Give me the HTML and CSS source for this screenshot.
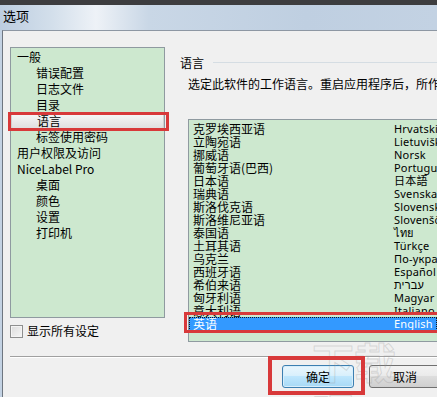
FILE: index.html
```html
<!DOCTYPE html>
<html lang="zh-CN">
<head>
    <meta charset="UTF-8">
    <title>选项</title>
    <link rel="stylesheet" href="styles.css">
</head>
<body>
    <div class="top-strip"></div>
    <div class="titlebar">选项</div>

    <div class="window">
        <div class="client">
            <div class="upper">
                <!-- Дерево разделов -->
                <div class="left-col">
                    <div class="tree">
                        <div class="node">一般</div>
                        <div class="node child">错误配置</div>
                        <div class="node child">日志文件</div>
                        <div class="node child">目录</div>
                        <div class="node child selected">语言</div>
                        <div class="node child">标签使用密码</div>
                        <div class="node">用户权限及访问</div>
                        <div class="node">NiceLabel Pro</div>
                        <div class="node child">桌面</div>
                        <div class="node child">颜色</div>
                        <div class="node child">设置</div>
                        <div class="node child">打印机</div>
                    </div>
                    <label class="check-row">
                        <span class="checkbox"></span>
                        显示所有设定
                    </label>
                </div>

                <!-- Язык -->
                <div class="right-col">
                    <div class="group-title">
                        <span>语言</span>
                        <div class="group-line"></div>
                    </div>
                    <div class="desc">选定此软件的工作语言。重启应用程序后，所作的更改将生效。</div>
                    <div class="lang-list">
                        <div class="lang"><span class="zh">克罗埃西亚语</span><span class="native">Hrvatski</span></div>
                        <div class="lang"><span class="zh">立陶宛语</span><span class="native">Lietuviškai</span></div>
                        <div class="lang"><span class="zh">挪威语</span><span class="native">Norsk</span></div>
                        <div class="lang"><span class="zh">葡萄牙语(巴西)</span><span class="native">Português</span></div>
                        <div class="lang"><span class="zh">日本语</span><span class="native">日本語</span></div>
                        <div class="lang"><span class="zh">瑞典语</span><span class="native">Svenska</span></div>
                        <div class="lang"><span class="zh">斯洛伐克语</span><span class="native">Slovensky</span></div>
                        <div class="lang"><span class="zh">斯洛维尼亚语</span><span class="native">Slovenščina</span></div>
                        <div class="lang"><span class="zh">泰国语</span><span class="native">ไทย</span></div>
                        <div class="lang"><span class="zh">土耳其语</span><span class="native">Türkçe</span></div>
                        <div class="lang"><span class="zh">乌克兰</span><span class="native">По-українськи</span></div>
                        <div class="lang"><span class="zh">西班牙语</span><span class="native">Español</span></div>
                        <div class="lang"><span class="zh">希伯来语</span><span class="native">עברית</span></div>
                        <div class="lang"><span class="zh">匈牙利语</span><span class="native">Magyar</span></div>
                        <div class="lang"><span class="zh">意大利语</span><span class="native">Italiano</span></div>
                        <div class="lang active"><span class="zh">英语</span><span class="native">English</span></div>
                    </div>
                </div>
            </div>

            <div class="separator"></div>

            <div class="buttons">
                <button class="btn default">确定</button>
                <button class="btn">取消</button>
            </div>
        </div>
    </div>

    <!-- водяной знак -->
    <div class="watermark">下载吧</div>

    <!-- красные рамки поверх скриншота -->
    <div class="mark mark-tree"></div>
    <div class="mark mark-list"></div>
    <div class="mark mark-ok"></div>
</body>
</html>
```

FILE: styles.css
```css
* {
    box-sizing: border-box;
}

body {
    margin: 0;
    width: 437px;
    height: 397px;
    overflow: hidden;
    position: relative;
    font-family: "Noto Sans", "Noto Sans CJK SC", sans-serif;
    font-size: 12px;
    color: #000;
    background: #f0f0f0;
}

.top-strip {
    height: 5px;
    background: #3d3d3f;
}

.titlebar {
    height: 25px;
    padding-left: 3px;
    line-height: 21px;
    font-size: 13px;
    font-family: "Noto Sans CJK SC", sans-serif;
    background: linear-gradient(90deg, #bccde0 0%, #d3dfeb 12%, #eef2f7 22%, #c9d7e6 34%, #bfcfe1 70%, #c3d2e3 100%);
}

.window {
    height: 367px;
    padding-left: 2px;
    background: #c3d2e3;
}

.client {
    height: 100%;
    border-left: 1px solid #6e7680;
    border-top: 1px solid #8d97a3;
    background: #f0f0f0;
    padding: 16px 0 0 7px;
}

.upper {
    display: flex;
    height: 295px;
}

.left-col {
    width: 155px;
    flex-shrink: 0;
}

.tree {
    height: 271px;
    border: 1px solid #8f9aa0;
    background: #cde8cf;
    padding-top: 1px;
    font-family: "Noto Sans CJK SC", sans-serif;
}

.node {
    height: 16px;
    line-height: 16px;
    padding-left: 6px;
    white-space: nowrap;
}

.node.child {
    padding-left: 25px;
}

.node.selected {
    background: linear-gradient(#f7f7f7, #e0e0e0);
    border: 1px solid #d0d0d0;
    border-radius: 2px;
    line-height: 14px;
}

.check-row {
    display: flex;
    align-items: center;
    gap: 4px;
    height: 16px;
    line-height: 16px;
    margin-top: 5px;
    font-family: "Noto Sans CJK SC", sans-serif;
    font-size: 12px;
}

.checkbox {
    width: 13px;
    height: 13px;
    border: 1px solid #8e8f8f;
    background: linear-gradient(135deg, #dcdcdc, #f6f6f6);
    box-shadow: inset 0 0 0 1px #f4f4f4;
}

.right-col {
    margin-left: 15px;
    flex: 1;
    min-width: 0;
    padding-top: 7px;
}

.group-title {
    display: flex;
    align-items: center;
    gap: 9px;
    height: 16px;
    font-family: "Noto Sans CJK SC", sans-serif;
}

.group-line {
    flex: 1;
    height: 1px;
    background: #d5dde3;
}

.desc {
    margin-top: 6px;
    padding-left: 8px;
    height: 16px;
    line-height: 16px;
    white-space: nowrap;
    overflow: hidden;
    font-family: "Noto Sans CJK SC", sans-serif;
}

.lang-list {
    margin: 27px 0 0 8px;
    width: 249px;
    height: 223px;
    border: 1px solid #8f9aa0;
    border-right: none;
    background: #cde8cf;
    padding-top: 2px;
    overflow: hidden;
}

.lang {
    display: flex;
    height: 13px;
    line-height: 13px;
    white-space: nowrap;
}

.lang .zh {
    width: 205px;
    flex-shrink: 0;
    padding-left: 4px;
    font-family: "Noto Sans CJK SC", sans-serif;
}

.lang .native {
    font-size: 11px;
    letter-spacing: 0.2px;
}

.lang.active {
    height: 14px;
    background: #3399ff;
    color: #fff;
    outline: 1px dotted #1a1a1a;
    outline-offset: -1px;
}

.separator {
    height: 2px;
    margin-top: 14px;
    border-top: 1px solid #a0a0a0;
    border-bottom: 1px solid #ffffff;
}

.buttons {
    display: flex;
    gap: 15px;
    margin-top: 7px;
    padding-left: 272px;
}

.btn {
    width: 72px;
    height: 23px;
    flex-shrink: 0;
    padding: 0;
    border: 1px solid #707070;
    border-radius: 3px;
    background: linear-gradient(#f2f2f2 0%, #ebebeb 45%, #dddddd 50%, #cfcfcf 100%);
    font-family: "Noto Sans CJK SC", sans-serif;
    font-size: 12px;
    color: #000;
}

.btn.default {
    border-color: #3c7fb1;
    background: linear-gradient(#eaf6fd 0%, #d9f0fc 45%, #bee6fd 50%, #a7d9f5 100%);
    box-shadow: inset 0 0 0 1px #d8eefb;
}

.watermark {
    position: absolute;
    left: 312px;
    top: 336px;
    font-family: "Noto Sans CJK SC", sans-serif;
    font-size: 42px;
    font-weight: bold;
    line-height: 50px;
    color: transparent;
    -webkit-text-stroke: 1px rgba(150, 150, 150, 0.3);
    pointer-events: none;
}

.mark {
    position: absolute;
    border: 3px solid #d8393a;
    pointer-events: none;
}

.mark-tree {
    left: 8px;
    top: 112px;
    width: 161px;
    height: 19px;
}

.mark-list {
    left: 184px;
    top: 312px;
    width: 260px;
    height: 21px;
}

.mark-ok {
    left: 268px;
    top: 356px;
    width: 97px;
    height: 39px;
    border-width: 4px;
}
```
